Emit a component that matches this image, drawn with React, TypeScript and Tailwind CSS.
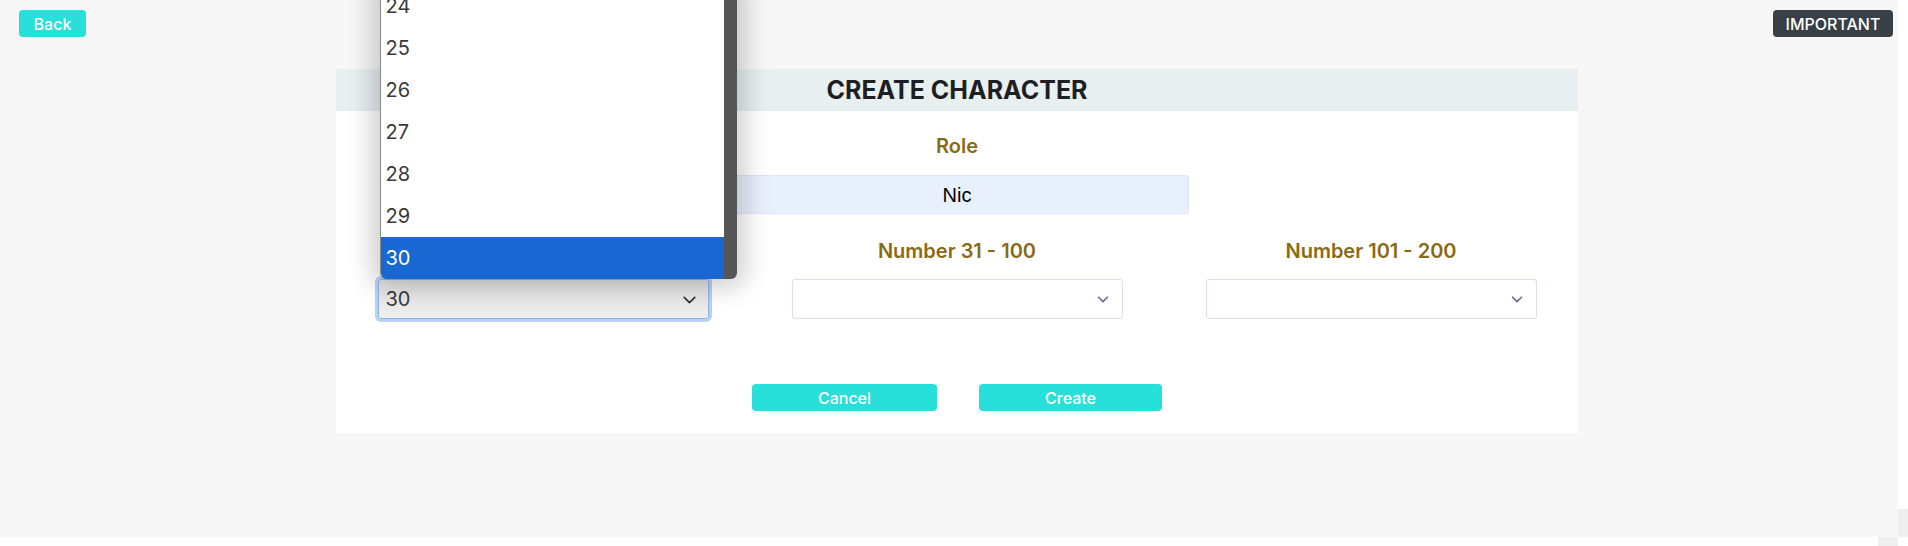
import React from 'react';

const opciones = [24, 25, 26, 27, 28, 29, 30];

function Chevron({ className, grosor = 2 }: { className?: string; grosor?: number }) {
  return (
    <svg viewBox="0 0 16 16" className={className} fill="none" stroke="currentColor" strokeWidth={grosor} strokeLinecap="round" strokeLinejoin="round">
      <path d="M3 6l5 5 5-5" />
    </svg>
  );
}

function SelectVacio() {
  return (
    <div className="mx-auto flex h-[40px] w-[331px] items-center justify-end rounded-[3px] border border-[#dcdcf2] bg-white pr-[12px]">
      <Chevron className="h-[14px] w-[14px] text-[#6e6f9c]" />
    </div>
  );
}

export default function App() {
  const [seleccion] = React.useState(30);

  return (
    <div className="flex flex-col bg-white" style={{ fontFamily: 'Inter, "Noto Sans", sans-serif' }}>
      <div className="flex">
        <div className="h-[537px] w-[1898px] bg-[#f7f7f7]">
          <div className="flex items-start justify-between pl-[19px] pr-[5px] pt-[10px]">
            <button className="h-[27px] w-[67px] rounded-[4px] bg-[#27e0d9] text-[16px] font-medium leading-none text-white">
              Back
            </button>
            <button className="h-[27px] w-[120px] rounded-[4px] bg-[#373f47] text-[16px] font-medium leading-none text-white">
              IMPORTANT
            </button>
          </div>

          <div className="ml-[336px] mt-[32px] w-[1242px] bg-white">
            <div className="flex h-[42px] items-center justify-center bg-[#e7eff1]">
              <h3 className="text-[25px] font-bold leading-none text-[#1e1f23]">CREATE CHARACTER</h3>
            </div>

            <div className="pt-[23px]">
              <div className="text-center text-[20px] font-semibold leading-[24px] text-[#8a6a14]">Role</div>
              <div
                className="mx-auto mt-[17px] flex h-[39px] w-[464px] items-center justify-center rounded-[3px] border border-[#dfe3f5] bg-[#e8effd] text-[20px] text-black"
                style={{ fontFamily: '"Liberation Sans", Arial, sans-serif' }}
              >
                Nic
              </div>

              <div className="mt-[25px] grid grid-cols-3">
                <div>
                  <div className="text-center text-[20px] font-semibold leading-[24px] text-[#8a6a14]">Number 1 - 30</div>
                  <div className="relative mx-auto mt-[16px] w-[331px]">
                    <div className="absolute bottom-full left-[2px] z-10 flex w-[357px] overflow-hidden rounded-b-[6px] border-l border-[#8a8a8a] bg-white shadow-[0_0_26px_8px_rgba(0,0,0,0.2)]">
                      <ul className="flex-1">
                        {opciones.map((n) => (
                          <li
                            key={n}
                            className={
                              n === seleccion
                                ? 'flex h-[42px] items-center bg-[#1967d2] pl-[5px] text-[20px] text-white'
                                : 'flex h-[42px] items-center pl-[5px] text-[20px] text-[#3a3a3a]'
                            }
                          >
                            {n}
                          </li>
                        ))}
                      </ul>
                      <div className="w-[13px] bg-[#555555]" />
                    </div>
                    <div className="flex h-[40px] items-center justify-between rounded-[3px] border border-[#8ab4e8] bg-gradient-to-b from-[#e2e2e2] to-[#efefef] pl-[7px] pr-[10px] text-[20px] text-[#3a3a3a] ring-[3px] ring-[#b7d3f2]">
                      <span>{seleccion}</span>
                      <Chevron className="h-[17px] w-[17px] text-[#333]" grosor={1.6} />
                    </div>
                  </div>
                </div>
                <div>
                  <div className="text-center text-[20px] font-semibold leading-[24px] text-[#8a6a14]">Number 31 - 100</div>
                  <div className="mt-[16px]">
                    <SelectVacio />
                  </div>
                </div>
                <div>
                  <div className="text-center text-[20px] font-semibold leading-[24px] text-[#8a6a14]">Number 101 - 200</div>
                  <div className="mt-[16px]">
                    <SelectVacio />
                  </div>
                </div>
              </div>

              <div className="flex justify-center gap-[42px] pb-[22px] pt-[65px]">
                <button className="h-[27px] w-[185px] rounded-[4px] bg-[#27e0d9] text-[16px] font-medium leading-none text-white">
                  Cancel
                </button>
                <button className="h-[27px] w-[183px] rounded-[4px] bg-[#27e0d9] text-[16px] font-medium leading-none text-white">
                  Create
                </button>
              </div>
            </div>
          </div>
        </div>
        <div className="flex w-[10px] flex-col">
          <div className="h-[509px]" />
          <div className="h-[28px] bg-[#efefef]" />
        </div>
      </div>
      <div className="flex h-[9px]">
        <div className="ml-[1878px] w-[20px] bg-[#efefef]" />
      </div>
    </div>
  );
}
